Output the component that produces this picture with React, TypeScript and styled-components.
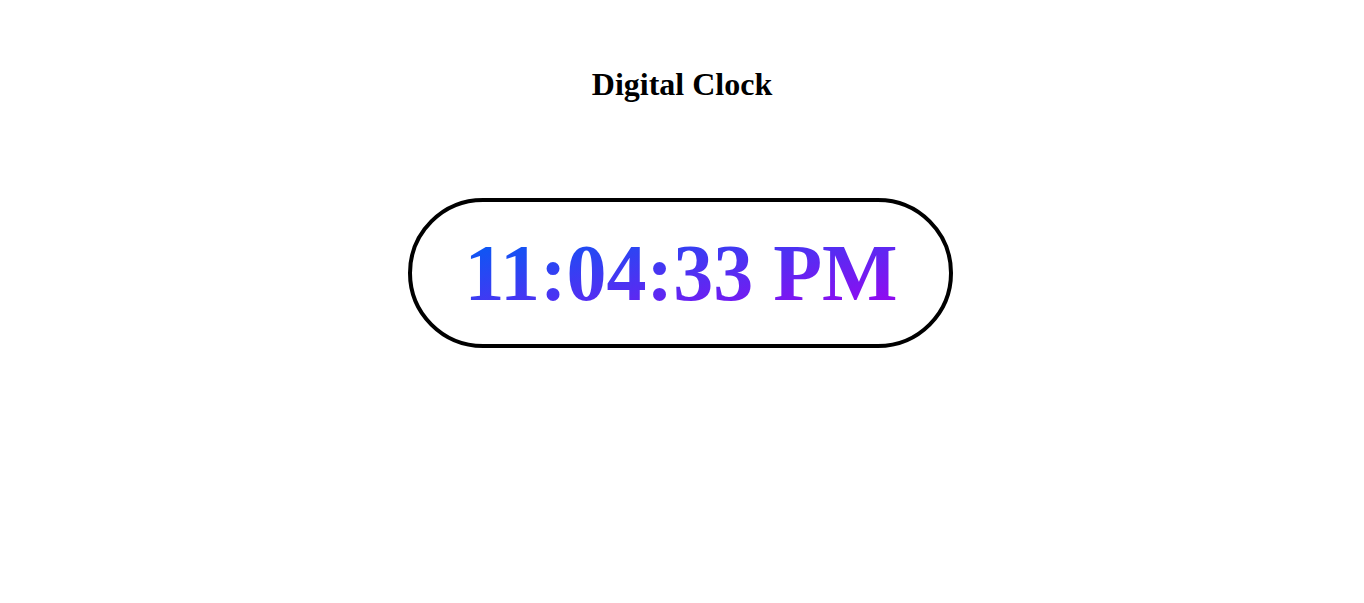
import React from "react";
import styled, { createGlobalStyle } from "styled-components";

const GlobalStyle = createGlobalStyle`
  html, body {
    margin: 0;
    padding: 0;
    background: #ffffff;
  }
  body {
    font-family: "Liberation Serif", "Times New Roman", serif;
  }
`;

const Page = styled.main`
  display: flex;
  flex-direction: column;
  align-items: center;
  padding-top: 66px;
`;

const Title = styled.h1`
  margin: 0;
  font-size: 32px;
  font-weight: bold;
  line-height: 37px;
  color: #000;
`;

const ClockFrame = styled.div`
  margin-top: 95px;
  margin-right: 3px;
  border: 4px solid #000;
  border-radius: 80px;
  padding: 25px 51px 25px 52px;
  background: #fff;
`;

const Time = styled.span`
  display: inline-block;
  font-size: 80px;
  font-weight: bold;
  line-height: 92px;
  background: linear-gradient(to bottom right, #005ef4 5%, #a300f0);
  -webkit-background-clip: text;
  background-clip: text;
  color: transparent;
  -webkit-text-fill-color: transparent;
`;

export default function App() {
  return (
    <>
      <GlobalStyle />
      <Page>
        <Title>Digital Clock</Title>
        <ClockFrame>
          <Time>11:04:33 PM</Time>
        </ClockFrame>
      </Page>
    </>
  );
}
